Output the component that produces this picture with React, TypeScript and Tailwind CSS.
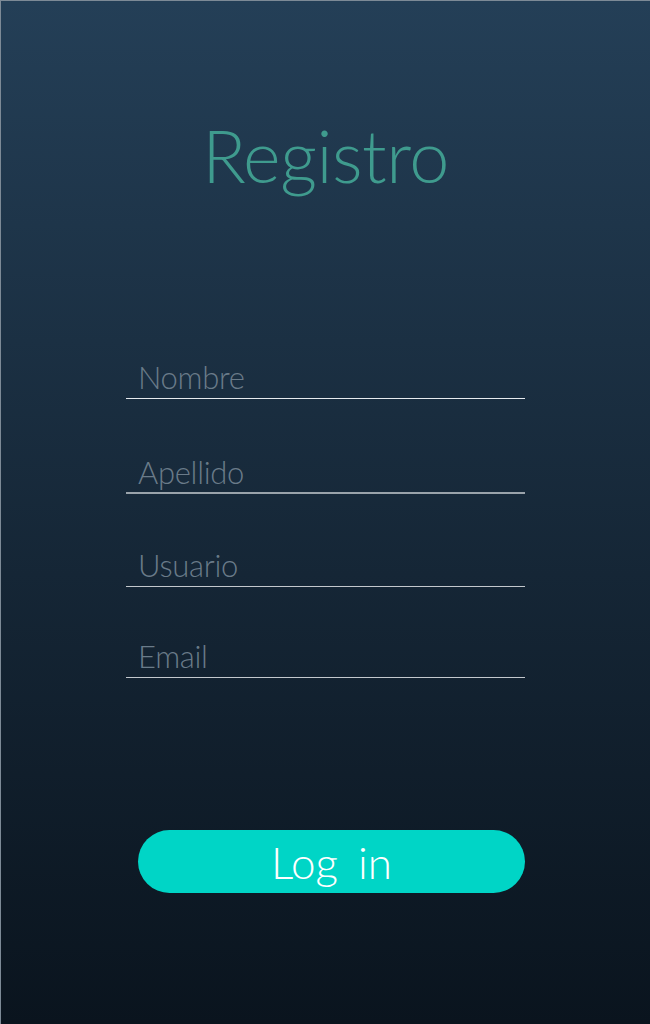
import React from "react";

const fields = [
  { label: "Nombre", wrap: "mt-0", line: "border-[#e6eaee]" },
  { label: "Apellido", wrap: "mt-[58px]", line: "border-[#9aa3ab] border-b-2" },
  { label: "Usuario", wrap: "mt-[56px]", line: "border-[#c3c8cd]" },
  { label: "Email", wrap: "mt-[54px]", line: "border-[#c3c8cd]" },
];

const App = () => {
  return (
    <div className="h-[1024px] w-[650px] overflow-hidden border-l border-t border-[#7d8a96] bg-gradient-to-b from-[#243f57] to-[#0a141e] font-['Lato','Open_Sans',sans-serif] font-light">
      <h1 className="mt-[106px] text-center text-[72px] leading-[96px] font-light tracking-[-0.5px] text-[#3f9b8e]">
        Registro
      </h1>

      {/* Formulario */}
      <div className="ml-[125px] mt-[159px] flex w-[399px] flex-col">
        {fields.map((f) => (
          <div key={f.label} className={`${f.wrap} h-[37px] border-b ${f.line}`}>
            <span className="block pl-[12px] text-[31px] leading-[30px] tracking-[-0.3px] text-[#6a7b89]">
              {f.label}
            </span>
          </div>
        ))}
      </div>

      <button className="ml-[137px] mt-[152px] flex h-[63px] w-[387px] items-center justify-center rounded-full bg-[#00d5c6] text-[44px] font-light text-white [word-spacing:8px]">
        Log in
      </button>
    </div>
  );
};

export default App;
